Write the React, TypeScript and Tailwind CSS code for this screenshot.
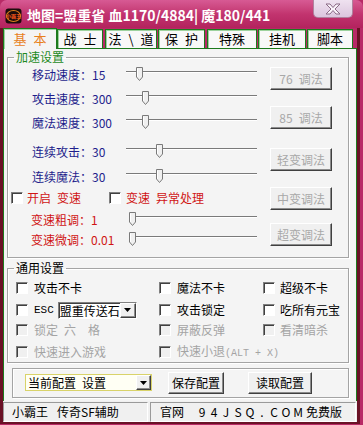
import React from "react";

const tabs = [
  { parts: ["基", "本"], w: "w-[54px]", ml: "ml-0", active: true },
  { parts: ["战", "士"], w: "w-[46px]", ml: "ml-0", active: false },
  { parts: ["法", "\\", "道"], w: "w-[52px]", ml: "ml-[2px]", active: false },
  { parts: ["保", "护"], w: "w-[47px]", ml: "ml-[1px]", active: false },
  { parts: ["特殊"], w: "w-[50px]", ml: "ml-[2px]", active: false },
  { parts: ["挂机"], w: "w-[48px]", ml: "ml-[1px]", active: false },
  { parts: ["脚本"], w: "w-[46px]", ml: "ml-[1px]", active: false },
];

const speedRows = [
  { label: "移动速度：15", pos: "left-[10px]", mt: "mt-[1px]" },
  { label: "攻击速度：300", pos: "left-[16px]", mt: "mt-[4px]" },
  { label: "魔法速度：300", pos: "left-[16px]", mt: "mt-[4px]" },
  { label: "连续攻击：30", pos: "left-[30px]", mt: "mt-[9px]" },
  { label: "连续魔法：30", pos: "left-[30px]", mt: "mt-[5px]" },
];

const speedButtons = [
  { label: "76 调法", mt: "mt-[3px]" },
  { label: "85 调法", mt: "mt-[16px]" },
  { label: "轻变调法", mt: "mt-[19px]" },
  { label: "中变调法", mt: "mt-[16px]" },
  { label: "超变调法", mt: "mt-[13px]" },
];

const site = ["9", "4", "J", "S", "Q", ".", "C", "O", "M"];

const raised =
  "bg-[#f0f0f0] border border-t-white border-l-white border-r-[#404040] border-b-[#404040] shadow-[inset_-1px_-1px_0_#8c8c8c]";
const sunken =
  "border border-t-[#808080] border-l-[#808080] border-r-white border-b-white shadow-[inset_1px_1px_0_#404040]";

// half-width spaces, as the old GDI font draws them
const sp = (s: string) => s.replace(/ /g, "\u2002");

function AppIcon() {
  return (
    <svg width="17" height="16" viewBox="0 0 17 16">
      <rect x="0.5" y="0.5" width="16" height="15" rx="3" fill="#1c0c0c" />
      <ellipse cx="8.5" cy="8" rx="7" ry="5.5" fill="none" stroke="#e0801c" strokeWidth="1.2" />
      <text x="8.5" y="10" fontSize="5" textAnchor="middle" fill="#ff5a1c" fontWeight="bold">
        小霸王
      </text>
    </svg>
  );
}

function CloseX() {
  return (
    <svg width="16" height="12" viewBox="0 0 16 12">
      <polygon
        points="1,1 5,1 8,4.5 11,1 15,1 10,6 15,11 11,11 8,7.5 5,11 1,11 6,6"
        fill="#fbf4fb"
        stroke="#8a6a86"
        strokeWidth="1"
      />
    </svg>
  );
}

function Arrow() {
  return (
    <svg width="7" height="4" viewBox="0 0 7 4">
      <polygon points="0,0 7,0 3.5,4" fill="#000" />
    </svg>
  );
}

function Thumb() {
  return (
    <svg width="7" height="14" viewBox="0 0 7 14">
      <path d="M0.5 0.5H6.5V10L3.5 13.5L0.5 10Z" fill="#f0f0f0" stroke="#7a7a7a" />
      <path d="M1.5 1.5V9.8" stroke="#ffffff" />
    </svg>
  );
}

function Slider({ w, pos }: { w: string; pos: string }) {
  return (
    <div className={`relative h-[20px] ${w}`}>
      <div className="absolute left-0 right-0 top-[6px] h-[2px] border-t border-t-[#7a7a7a] border-b border-b-white" />
      <div className={`absolute top-[2px] ${pos}`}>
        <Thumb />
      </div>
    </div>
  );
}

function Check({ disabled }: { disabled?: boolean }) {
  return (
    <span
      className={`block w-[12px] h-[12px] shrink-0 ${sunken} ${
        disabled ? "bg-[#f0f0f0]" : "bg-white"
      }`}
    />
  );
}

function Option({
  label,
  disabled,
  gap = "gap-[6px]",
  children,
}: {
  label: string;
  disabled?: boolean;
  gap?: string;
  children?: React.ReactNode;
}) {
  return (
    <div className={`flex items-center h-[18px] ${gap}`}>
      <Check disabled={disabled} />
      <span className={`whitespace-pre ${disabled ? "text-[#a4a4a4]" : "text-black"}`}>
        {sp(label)}
        {children}
      </span>
    </div>
  );
}

function Group({
  title,
  titleClass,
  className,
  children,
}: {
  title: string;
  titleClass: string;
  className: string;
  children: React.ReactNode;
}) {
  return (
    <fieldset
      className={`border border-[#a4a4a4] shadow-[inset_1px_1px_0_#fff,1px_1px_0_#fff] ${className}`}
    >
      <legend className={`ml-[6px] px-[2px] text-[12px] leading-[14px] ${titleClass}`}>{title}</legend>
      {children}
    </fieldset>
  );
}

export default function App() {
  return (
    <div className="w-[363px] h-[425px] flex flex-col bg-[#b82a66] text-[12px] leading-[14px] font-['Noto_Sans_CJK_SC',sans-serif] overflow-hidden">
      {/* title bar */}
      <div className="h-[28px] shrink-0 flex items-start rounded-t-[7px] bg-gradient-to-b from-[#d75a94] via-[#c2346f] to-[#b3235e]">
        <div className="mt-[8px] ml-[5px]">
          <AppIcon />
        </div>
        <div className="ml-[5px] mt-[6px] text-white font-bold text-[14px] leading-[18px] whitespace-pre">
          地图=盟重省 血1170/4884| 魔180/441
        </div>
        <div className="ml-auto mr-[10px] w-[40px] h-[18px] flex items-center justify-center rounded-b-[5px] border border-t-0 border-[#b0829e] bg-gradient-to-b from-[#efe2f0] to-[#dcc6de]">
          <CloseX />
        </div>
      </div>

      <div className="flex-1 flex flex-col mr-[3px] mb-[1px] border-l-[3px] border-r-[3px] border-b-[2px] border-[#6a1226]">
        {/* tabs */}
        <div className="h-[20px] shrink-0 flex items-end">
          {tabs.map((t) => (
            <div
              key={t.parts.join("")}
              className={`${t.w} ${t.ml} flex items-center justify-center gap-[7px] border border-b-0 border-[#1d7a1d] shadow-[inset_1px_1px_0_#9ed29e] text-[13px] ${
                t.active
                  ? "relative top-[1px] z-10 h-[21px] bg-[#f4f4f4] text-[#e8801c]"
                  : "h-[19px] bg-[#f8f8f8] text-black"
              }`}
            >
              {t.parts.map((p) => (
                <span key={p}>{p}</span>
              ))}
            </div>
          ))}
        </div>

        {/* panel */}
        <div className="h-[353px] shrink-0 flex flex-col bg-[#f4f4f4] border border-b-0 border-[#1d7a1d]">
          <Group
            title="加速设置"
            titleClass="text-[#1e8a1e]"
            className="ml-[3px] mt-[1px] w-[342px] h-[208px]"
          >
            <div className="flex">
              <div className="flex-1 flex flex-col pl-[3px]">
                {speedRows.map((r) => (
                  <div key={r.label} className={`flex items-center h-[20px] ${r.mt}`}>
                    <span className="ml-[21px] w-[94px] text-[#1e1e8c]">{r.label}</span>
                    <Slider w="w-[131px]" pos={r.pos} />
                  </div>
                ))}
                <div className="flex items-center h-[20px] mt-[1px] text-[#d01414]">
                  <Check />
                  <span className="ml-[4px] w-[82px] whitespace-pre">{sp("开启 变速")}</span>
                  <Check />
                  <span className="ml-[5px] whitespace-pre">{sp("变速 异常处理")}</span>
                </div>
                <div className="flex items-center h-[20px] mt-[2px] text-[#d01414]">
                  <span className="ml-[20px] w-[98px]">变速粗调：1</span>
                  <Slider w="w-[128px]" pos="left-0" />
                </div>
                <div className="flex items-center h-[20px] text-[#d01414]">
                  <span className="ml-[20px] w-[98px]">变速微调：0.01</span>
                  <Slider w="w-[128px]" pos="left-0" />
                </div>
              </div>
              <div className="w-[62px] mr-[16px] flex flex-col">
                {speedButtons.map((b) => (
                  <div
                    key={b.label}
                    className={`h-[23px] flex items-center justify-center text-[#a8a8a8] whitespace-pre ${raised} ${b.mt}`}
                  >
                    {sp(b.label)}
                  </div>
                ))}
              </div>
            </div>
          </Group>

          <Group
            title="通用设置"
            titleClass="text-black"
            className="ml-[3px] mt-[3px] w-[342px] h-[102px]"
          >
            <div className="grid grid-cols-[143px_104px_1fr] pl-[8px]">
              <div className="mt-[4px]"><Option label="攻击不卡" /></div>
              <div className="mt-[4px]"><Option label="魔法不卡" /></div>
              <div className="mt-[4px]"><Option label="超级不卡" gap="gap-[5px]" /></div>

              <div className="mt-[4px] flex items-center h-[18px]">
                <Check />
                <span className="ml-[6px] font-['Liberation_Mono',monospace] text-[11px]">ESC</span>
                <div className={`ml-[4px] w-[79px] h-[17px] flex bg-white ${sunken}`}>
                  <span className="flex-1 overflow-hidden whitespace-nowrap pl-[1px] leading-[15px] text-black">
                    盟重传送石
                  </span>
                  <span className={`w-[16px] h-full flex items-center justify-center ${raised}`}>
                    <Arrow />
                  </span>
                </div>
              </div>
              <div className="mt-[4px]"><Option label="攻击锁定" /></div>
              <div className="mt-[4px]"><Option label="吃所有元宝" gap="gap-[5px]" /></div>

              <div className="mt-[2px]"><Option label="锁定 六  格" disabled /></div>
              <div className="mt-[2px]"><Option label="屏蔽反弹" disabled /></div>
              <div className="mt-[2px]"><Option label="看清暗杀" disabled gap="gap-[5px]" /></div>

              <div className="mt-[4px]"><Option label="快速进入游戏" disabled /></div>
              <div className="mt-[4px] col-span-2">
                <Option label="快速小退" disabled>
                  <span className="font-['Liberation_Mono',monospace] text-[10px]">(ALT + X)</span>
                </Option>
              </div>
            </div>
          </Group>

          <div className="ml-[8px] mt-[5px] w-[337px] h-[30px] flex items-start pl-[12px] border border-[#a4a4a4] shadow-[inset_1px_1px_0_#fff,1px_1px_0_#fff]">
            <div className="mt-[5px] w-[127px] h-[17px] flex border border-[#d9d36a] bg-[#fffff4]">
              <span className="flex-1 pl-[2px] leading-[15px] text-black whitespace-pre">{sp("当前配置 设置")}</span>
              <span className={`w-[15px] h-full flex items-center justify-center ${raised}`}>
                <Arrow />
              </span>
            </div>
            <div className={`ml-[16px] mt-[3px] w-[56px] h-[22px] flex items-center justify-center text-black ${raised}`}>
              保存配置
            </div>
            <div className={`ml-[24px] mt-[3px] w-[64px] h-[22px] flex items-center justify-center text-black ${raised}`}>
              读取配置
            </div>
          </div>
        </div>

        {/* status bar */}
        <div className="h-[21px] shrink-0 flex gap-[2px] bg-[#f0f0f0] pt-[1px] pr-[1px]">
          <div className="w-[145px] flex items-center pl-[8px] border border-t-[#9a9a9a] border-l-[#9a9a9a] border-r-white border-b-white text-black">
            <span>小霸王</span>
            <span className="ml-[9px]">传奇SF辅助</span>
          </div>
          <div className="flex-1 flex items-center pl-[9px] border border-t-[#9a9a9a] border-l-[#9a9a9a] border-r-white border-b-white text-black">
            <span>官网</span>
            <span className="ml-[12px] flex">
              {site.map((c, i) => (
                <span key={i} className="w-[12px] text-center">
                  {c}
                </span>
              ))}
            </span>
            <span className="ml-[2px]">免费版</span>
          </div>
        </div>
      </div>
    </div>
  );
}
